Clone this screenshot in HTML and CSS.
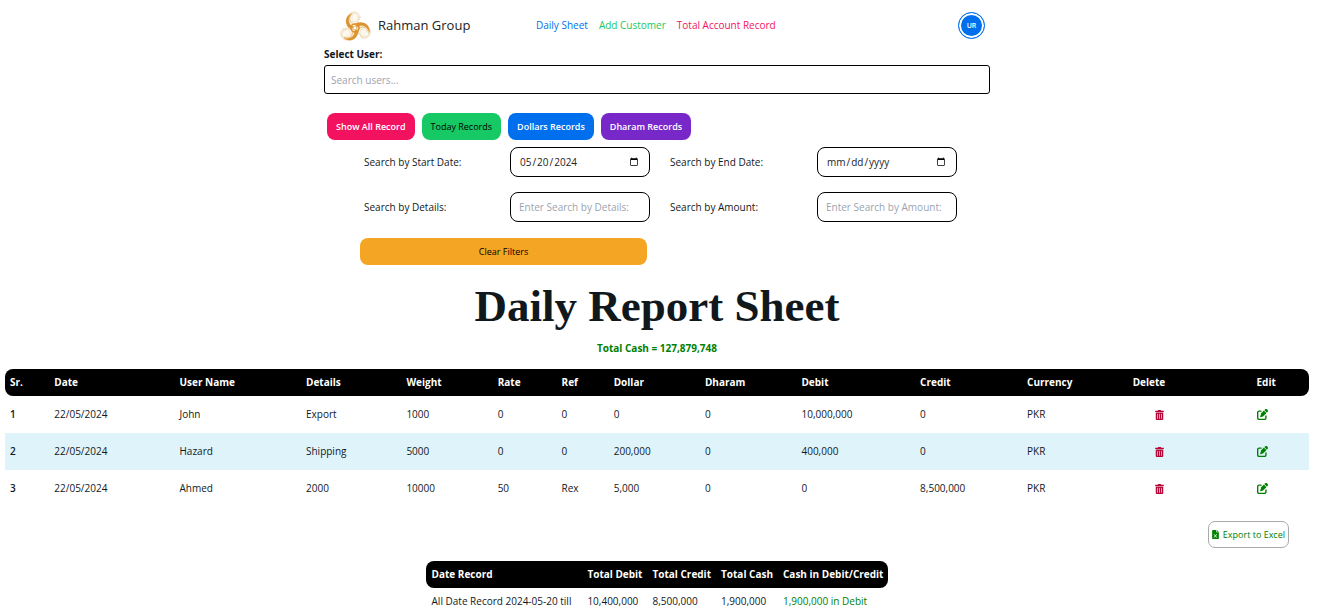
FILE: index.html
```html
<!DOCTYPE html>
<html lang="en">
<head>
<meta charset="utf-8">
<title>Daily Report Sheet</title>
<link rel="stylesheet" href="styles.css">
</head>
<body>
<svg class="sprite" aria-hidden="true">
  <symbol id="trash" viewBox="0 0 448 512"><path fill="currentColor" fill-rule="evenodd" d="M32 464a48 48 0 0 0 48 48h288a48 48 0 0 0 48-48V128H32zm272-256a16 16 0 0 1 32 0v224a16 16 0 0 1-32 0zm-96 0a16 16 0 0 1 32 0v224a16 16 0 0 1-32 0zm-96 0a16 16 0 0 1 32 0v224a16 16 0 0 1-32 0zM432 32H312l-9-19A24 24 0 0 0 281 0H167a24 24 0 0 0-22 13l-9 19H16A16 16 0 0 0 0 48v32a16 16 0 0 0 16 16h416a16 16 0 0 0 16-16V48a16 16 0 0 0-16-16z"/></symbol>
  <symbol id="edit" viewBox="0 0 512 512"><path fill="currentColor" d="M472 22l18 18c28 28 28 72 0 100l-30 30L342 52l30-30c28-28 72-28 100 0zM172 221L320 74l118 118-147 148c-6 6-14 11-23 14l-89 29c-20 6-38-12-31-31l29-89c3-9 8-17 15-24zM96 64h96c18 0 32 14 32 32s-14 32-32 32H96c-18 0-32 14-32 32v256c0 18 14 32 32 32h256c18 0 32-14 32-32v-96c0-18 14-32 32-32s32 14 32 32v96c0 53-43 96-96 96H96c-53 0-96-43-96-96V160c0-53 43-96 96-96z"/></symbol>
</svg>

<header class="navbar container">
  <a class="brand" href="#">
    <svg class="logo" viewBox="0 0 32 32" aria-hidden="true">
      <g fill="none" stroke-linecap="round">
        <g id="lobe">
          <ellipse cx="15" cy="7" rx="6" ry="5" fill="#fdf8f0" stroke="#ead0a6" stroke-width=".6"/>
          <ellipse cx="15" cy="9" rx="5" ry="6" stroke="#ecd6b2" stroke-width=".5"/>
          <ellipse cx="16" cy="8" rx="3" ry="6" stroke="#f0dfc4" stroke-width=".5"/>
          <path d="M13 3C5 6 5 15 12 20l3-3C9 14 8 9 13 3z" fill="#dc9430"/>
          <path d="M13 4C9 9 10 13 16 15" stroke="#e8b96e" stroke-width=".8"/>
        </g>
        <use href="#lobe" transform="rotate(120 16 18)"/>
        <use href="#lobe" transform="rotate(240 16 18)"/>
        <circle cx="16" cy="18" r="4" stroke="#dc9430" stroke-width="1.6"/>
        <circle cx="16" cy="18" r="2" stroke="#e8b96e"/>
      </g>
    </svg>
    <span>Rahman Group</span>
  </a>
  <nav class="links">
    <a class="link-blue" href="#">Daily Sheet</a>
    <a class="link-green" href="#">Add Customer</a>
    <a class="link-pink" href="#">Total Account Record</a>
  </nav>
  <button class="avatar" type="button">UR</button>
</header>

<main>
  <section class="container">
    <label class="user-label" for="user">Select User:</label>
    <input class="user-input" id="user" type="text" placeholder="Search users...">
    <div class="actions">
      <button class="btn btn-pink" type="button">Show All Record</button>
      <button class="btn btn-green" type="button">Today Records</button>
      <button class="btn btn-blue" type="button">Dollars Records</button>
      <button class="btn btn-purple" type="button">Dharam Records</button>
    </div>
    <div class="filters">
      <label for="start">Search by Start Date:</label>
      <input class="field" id="start" type="date" value="2024-05-20">
      <label for="end">Search by End Date:</label>
      <input class="field" id="end" type="date">
      <label for="details">Search by Details:</label>
      <input class="field" id="details" type="text" placeholder="Enter Search by Details:">
      <label for="amount">Search by Amount:</label>
      <input class="field" id="amount" type="text" placeholder="Enter Search by Amount:">
    </div>
    <button class="btn btn-orange" type="button">Clear Filters</button>
  </section>

  <h1 class="title">Daily Report Sheet</h1>
  <p class="total">Total Cash = 127,879,748</p>

  <table class="table report">
    <colgroup>
      <col class="c-sr"><col class="c-date"><col class="c-name"><col class="c-details"><col class="c-weight"><col class="c-rate"><col class="c-ref"><col class="c-dollar"><col class="c-dharam"><col class="c-debit"><col class="c-credit"><col class="c-currency"><col class="c-delete"><col class="c-edit">
    </colgroup>
    <thead>
      <tr><th>Sr.</th><th>Date</th><th>User Name</th><th>Details</th><th>Weight</th><th>Rate</th><th>Ref</th><th>Dollar</th><th>Dharam</th><th>Debit</th><th>Credit</th><th>Currency</th><th>Delete</th><th>Edit</th></tr>
    </thead>
    <tbody>
      <tr><th>1</th><td>22/05/2024</td><td>John</td><td>Export</td><td>1000</td><td>0</td><td>0</td><td>0</td><td>0</td><td>10,000,000</td><td>0</td><td>PKR</td>
        <td><button class="icon-btn delete" type="button" aria-label="Delete"><svg class="icon-trash"><use href="#trash"/></svg></button></td>
        <td><button class="icon-btn edit" type="button" aria-label="Edit"><svg class="icon-edit"><use href="#edit"/></svg></button></td></tr>
      <tr><th>2</th><td>22/05/2024</td><td>Hazard</td><td>Shipping</td><td>5000</td><td>0</td><td>0</td><td>200,000</td><td>0</td><td>400,000</td><td>0</td><td>PKR</td>
        <td><button class="icon-btn delete" type="button" aria-label="Delete"><svg class="icon-trash"><use href="#trash"/></svg></button></td>
        <td><button class="icon-btn edit" type="button" aria-label="Edit"><svg class="icon-edit"><use href="#edit"/></svg></button></td></tr>
      <tr><th>3</th><td>22/05/2024</td><td>Ahmed</td><td>2000</td><td>10000</td><td>50</td><td>Rex</td><td>5,000</td><td>0</td><td>0</td><td>8,500,000</td><td>PKR</td>
        <td><button class="icon-btn delete" type="button" aria-label="Delete"><svg class="icon-trash"><use href="#trash"/></svg></button></td>
        <td><button class="icon-btn edit" type="button" aria-label="Edit"><svg class="icon-edit"><use href="#edit"/></svg></button></td></tr>
    </tbody>
  </table>

  <div class="export-row">
    <button class="export" type="button">
      <svg class="icon-file" viewBox="0 0 384 512" aria-hidden="true"><path fill="currentColor" d="M48 0h176v128h160v336a48 48 0 0 1-48 48H48a48 48 0 0 1-48-48V48A48 48 0 0 1 48 0zM256 0l128 96H256z"/><path d="M112 240l150 190M262 240L112 430" stroke="#fff" stroke-width="48"/></svg>
      Export to Excel
    </button>
  </div>

  <table class="table summary">
    <thead>
      <tr><th>Date Record</th><th>Total Debit</th><th>Total Credit</th><th>Total Cash</th><th>Cash in Debit/Credit</th></tr>
    </thead>
    <tbody>
      <tr><td>All Date Record 2024-05-20 till</td><td>10,400,000</td><td>8,500,000</td><td>1,900,000</td><td class="positive">1,900,000 in Debit</td></tr>
    </tbody>
  </table>
</main>
</body>
</html>
```
FILE: styles.css
```css
* {
  box-sizing: border-box;
}

body {
  margin: 0;
  padding: 0 8px 0 5px;
  background: #fff;
  color: #11181c;
  font: 10px/15px "Open Sans", "Noto Sans", sans-serif;
}

input,
button {
  font: inherit;
}

button {
  cursor: pointer;
}

a {
  text-decoration: none;
}

.sprite {
  display: none;
}

.container {
  max-width: 666px;
  margin: 0 auto;
}

.navbar {
  display: flex;
  align-items: center;
  height: 47px;
  padding: 4px 5px 0 15px;
}

.brand {
  display: flex;
  align-items: center;
  gap: 7px;
  width: 197px;
  color: #222;
  font-size: 13px;
}

.logo {
  width: 32px;
  height: 32px;
}

.links {
  display: flex;
  flex: 1;
  gap: 11px;
}

.link-blue {
  color: #006fee;
}

.link-green {
  color: #17c964;
}

.link-pink {
  color: #f31260;
}

.avatar {
  width: 27px;
  height: 27px;
  padding: 0;
  border: 1px solid #006fee;
  border-radius: 50%;
  background: #006fee;
  box-shadow: inset 0 0 0 2px #fff;
  color: #fff;
  font-size: 7px;
  font-weight: 600;
}

.user-label {
  display: block;
  padding-bottom: 3px;
  font-weight: 700;
}

.user-input {
  display: block;
  width: 100%;
  height: 29px;
  padding: 0 6px;
  border: 1px solid #000;
  border-radius: 3px;
}

::placeholder {
  color: #9ca3af;
  opacity: 1;
}

.actions {
  display: flex;
  gap: 7px;
  padding: 19px 3px 7px;
}

.btn {
  height: 27px;
  padding: 0 9px;
  border: 0;
  border-radius: 8px;
  color: #fff;
  font-size: 9px;
  font-weight: 600;
}

.btn-pink {
  background: #f31260;
}

.btn-green {
  background: #17c964;
  color: #000;
  font-weight: 400;
}

.btn-blue {
  background: #006fee;
}

.btn-purple {
  background: #7828c8;
}

.btn-orange {
  display: block;
  width: 287px;
  margin: 16px 0 0 36px;
  background: #f5a524;
  color: #000;
  font-weight: 400;
}

.filters {
  display: grid;
  grid-template-columns: 166px 140px 1fr 140px;
  gap: 15px 0;
  align-items: center;
  padding: 0 33px 0 20px;
}

.filters label {
  padding-left: 20px;
}

.field {
  width: 100%;
  height: 30px;
  padding: 0 8px;
  border: 1px solid #000;
  border-radius: 8px;
  background: #fff;
  color: #222;
}

.title {
  margin: 12px 0 0;
  font: bold 45px/58px "Liberation Serif", serif;
  text-align: center;
}

.total {
  margin: 6px 0 13px;
  color: #008000;
  font-weight: 700;
  text-align: center;
}

.table {
  border-collapse: separate;
  border-spacing: 0;
}

.table th,
.table td {
  padding: 0 5px;
  text-align: left;
  white-space: nowrap;
}

.table thead th {
  height: 27px;
  background: #000;
  color: #fff;
  font-weight: 700;
}

.table thead th:first-child {
  border-radius: 8px 0 0 8px;
}

.table thead th:last-child {
  border-radius: 0 8px 8px 0;
}

.report {
  width: 100%;
  table-layout: fixed;
}

.report tbody th,
.report tbody td {
  height: 37px;
}

.report tbody th {
  font-weight: 600;
}

.report tbody tr:nth-child(even) {
  background: #dff3fa;
}

.c-sr { width: 3.4%; }
.c-date { width: 9.6%; }
.c-name { width: 9.7%; }
.c-details { width: 7.7%; }
.c-weight { width: 7%; }
.c-rate { width: 4.9%; }
.c-ref { width: 4%; }
.c-dollar { width: 7%; }
.c-dharam { width: 7.4%; }
.c-debit { width: 9.1%; }
.c-credit { width: 8.2%; }
.c-currency { width: 8.1%; }
.c-delete { width: 9.5%; }
.c-edit { width: 4.4%; }

.icon-btn {
  display: flex;
  padding: 0;
  border: 0;
  background: none;
}

.delete {
  padding-left: 22px;
  color: #b4083a;
}

.edit {
  color: #008000;
}

.icon-trash {
  width: 9px;
  height: 10px;
}

.icon-edit {
  width: 11px;
  height: 11px;
}

.export-row {
  display: flex;
  justify-content: flex-end;
  padding: 14px 20px 13px 0;
}

.export {
  display: flex;
  align-items: center;
  gap: 4px;
  height: 27px;
  padding: 0 3px;
  border: 1px solid #aaa;
  border-radius: 7px;
  background: #fff;
  color: #008000;
  font-size: 9px;
}

.icon-file {
  width: 7px;
  height: 9px;
}

.summary {
  margin: 0 auto;
}

.summary th:first-child,
.summary td:first-child {
  padding: 0 11px 0 6px;
}

.summary tbody td {
  height: 27px;
}

.summary .positive {
  color: #008000;
}
```
